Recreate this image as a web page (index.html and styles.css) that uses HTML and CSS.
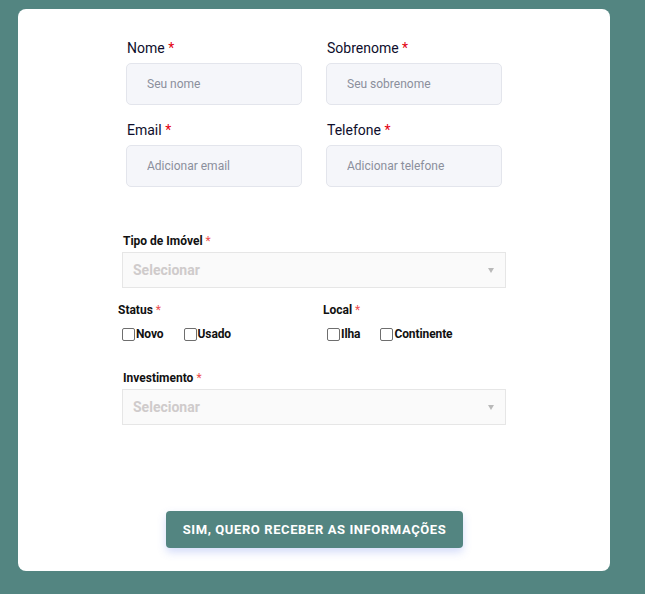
FILE: index.html
```html
<!DOCTYPE html>
<html lang="pt-BR">
<head>
    <meta charset="UTF-8">
    <meta name="viewport" content="width=device-width, initial-scale=1.0">
    <title>Cadastro de Interesse</title>
    <link rel="stylesheet" href="styles.css">
</head>
<body>
    <div class="form-card">
        <div class="contact-grid">
            <div class="field">
                <label>Nome <span class="req">*</span></label>
                <input type="text" placeholder="Seu nome">
            </div>
            <div class="field">
                <label>Sobrenome <span class="req">*</span></label>
                <input type="text" placeholder="Seu sobrenome">
            </div>
            <div class="field">
                <label>Email <span class="req">*</span></label>
                <input type="email" placeholder="Adicionar email">
            </div>
            <div class="field">
                <label>Telefone <span class="req">*</span></label>
                <input type="tel" placeholder="Adicionar telefone">
            </div>
        </div>

        <div class="property">
            <div class="select-group">
                <div class="small-label">Tipo de Imóvel <span class="star">*</span></div>
                <div class="select-box">
                    <span>Selecionar</span>
                    <span class="caret"></span>
                </div>
            </div>

            <div class="options">
                <div class="option-col">
                    <div class="small-label">Status <span class="star">*</span></div>
                    <div class="checks">
                        <label class="check"><input type="checkbox">Novo</label>
                        <label class="check"><input type="checkbox">Usado</label>
                    </div>
                </div>
                <div class="option-col">
                    <div class="small-label">Local <span class="star">*</span></div>
                    <div class="checks">
                        <label class="check"><input type="checkbox">Ilha</label>
                        <label class="check"><input type="checkbox">Continente</label>
                    </div>
                </div>
            </div>

            <div class="select-group invest">
                <div class="small-label">Investimento <span class="star">*</span></div>
                <div class="select-box">
                    <span>Selecionar</span>
                    <span class="caret"></span>
                </div>
            </div>
        </div>

        <button class="submit-btn">Sim, quero receber as informações</button>
    </div>
</body>
</html>
```

FILE: styles.css
```css
* {
    margin: 0;
    padding: 0;
    box-sizing: border-box;
}

body {
    background: #538581;
    font-family: Roboto, 'Liberation Sans', sans-serif;
    min-height: 100vh;
}

.form-card {
    background: #ffffff;
    width: 592px;
    height: 562px;
    margin: 9px 0 0 18px;
    border-radius: 8px;
    padding-top: 29px;
}

.contact-grid {
    display: grid;
    grid-template-columns: 176px 176px;
    column-gap: 24px;
    row-gap: 15px;
    margin-left: 108px;
}

.field label {
    display: block;
    font-size: 14px;
    line-height: 20px;
    color: #0e0e2c;
    padding-left: 1px;
}

.req {
    color: #e3000f;
}

.field input {
    display: block;
    width: 100%;
    height: 42px;
    margin-top: 5px;
    background: #f5f6fa;
    border: 1px solid #e3e5ec;
    border-radius: 5px;
    padding: 0 20px;
    font-family: Roboto, sans-serif;
    font-size: 12px;
    color: #333;
}

.field input::placeholder {
    color: #8b8f9c;
}

.property {
    margin-left: 104px;
    margin-top: 46px;
    width: 384px;
}

.small-label {
    font-size: 12px;
    line-height: 16px;
    font-weight: 700;
    color: #111;
    padding-left: 1px;
}

.star {
    color: #ed4f4f;
    font-weight: 400;
}

.select-box {
    margin-top: 3px;
    height: 36px;
    background: #fafafa;
    border: 1px solid #e6e6e6;
    display: flex;
    align-items: center;
    justify-content: space-between;
    padding: 0 11px 0 10px;
    font-size: 14px;
    font-weight: 700;
    color: #cfcbcb;
}

.caret {
    width: 0;
    height: 0;
    border-left: 3.5px solid transparent;
    border-right: 3.5px solid transparent;
    border-top: 5px solid #b9b9b9;
}

.options {
    display: flex;
    margin-top: 14px;
    margin-left: -5px;
}

.option-col {
    width: 205px;
    flex-shrink: 0;
}

.checks {
    display: flex;
    gap: 20px;
    margin-top: 8px;
    padding-left: 5px;
}

.check {
    display: flex;
    align-items: center;
    gap: 1px;
    font-size: 12px;
    line-height: 16px;
    font-weight: 700;
    color: #111;
    letter-spacing: -0.1px;
}

.check input {
    appearance: none;
    width: 13px;
    height: 13px;
    margin: 0;
    background: #ffffff;
    border: 1px solid #6e6e6e;
    border-radius: 2px;
}

.invest {
    margin-top: 28px;
}

.submit-btn {
    display: block;
    margin: 86px 0 0 148px;
    width: 297px;
    height: 37px;
    background: #538581;
    color: #ffffff;
    border: none;
    border-radius: 4px;
    font-family: Roboto, 'Liberation Sans', sans-serif;
    font-size: 13px;
    font-weight: 700;
    letter-spacing: 0.6px;
    text-transform: uppercase;
    box-shadow: 0 4px 8px rgba(80, 110, 230, 0.25);
    cursor: pointer;
}
```
